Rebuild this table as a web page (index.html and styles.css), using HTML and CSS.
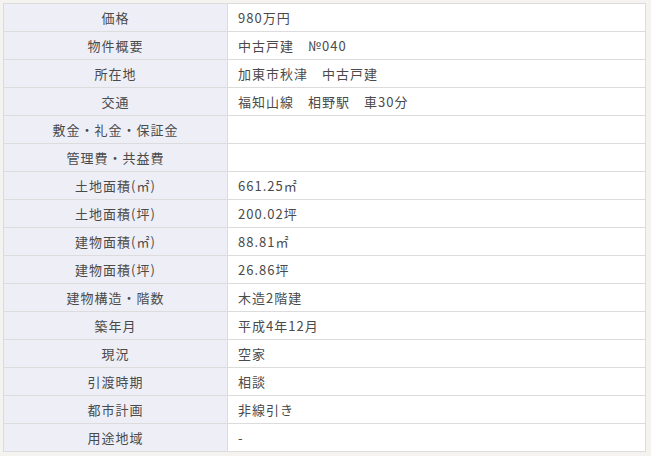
FILE: index.html
```html
<!DOCTYPE html>
<html lang="ja">
<head>
<meta charset="utf-8">
<link rel="stylesheet" href="styles.css">
</head>
<body>
<table class="spec">
<tr><th>価格</th><td>980万円</td></tr>
<tr><th>物件概要</th><td>中古戸建　№040</td></tr>
<tr><th>所在地</th><td>加東市秋津　中古戸建</td></tr>
<tr><th>交通</th><td>福知山線　相野駅　車30分</td></tr>
<tr><th>敷金・礼金・保証金</th><td></td></tr>
<tr><th>管理費・共益費</th><td></td></tr>
<tr><th>土地面積(㎡)</th><td>661.25㎡</td></tr>
<tr><th>土地面積(坪)</th><td>200.02坪</td></tr>
<tr><th>建物面積(㎡)</th><td>88.81㎡</td></tr>
<tr><th>建物面積(坪)</th><td>26.86坪</td></tr>
<tr><th>建物構造・階数</th><td>木造2階建</td></tr>
<tr><th>築年月</th><td>平成4年12月</td></tr>
<tr><th>現況</th><td>空家</td></tr>
<tr><th>引渡時期</th><td>相談</td></tr>
<tr><th>都市計画</th><td>非線引き</td></tr>
<tr><th>用途地域</th><td>-</td></tr>
</table>
</body>
</html>
```

FILE: styles.css
```css
html, body {
  margin: 0;
  background: #f4f3ef;
}
body {
  padding: 3px 0 0 3px;
  font-family: "Noto Sans CJK JP", "Noto Sans", sans-serif;
  font-size: 13px;
  color: #4a4a4a;
}
.spec {
  width: 643px;
  border-collapse: collapse;
  border: 1px solid #dcdcdc;
}
.spec th, .spec td {
  height: 28px;
  padding: 0;
  border-bottom: 1px solid #dcdcdc;
  box-sizing: border-box;
  line-height: 1;
  letter-spacing: 1px;
  vertical-align: middle;
}
.spec th {
  width: 224px;
  background: #eeeff6;
  font-weight: normal;
  text-align: center;
  border-right: 1px solid #dcdcdc;
}
.spec td {
  background: #fff;
  text-align: left;
  padding-left: 10px;
}
```
